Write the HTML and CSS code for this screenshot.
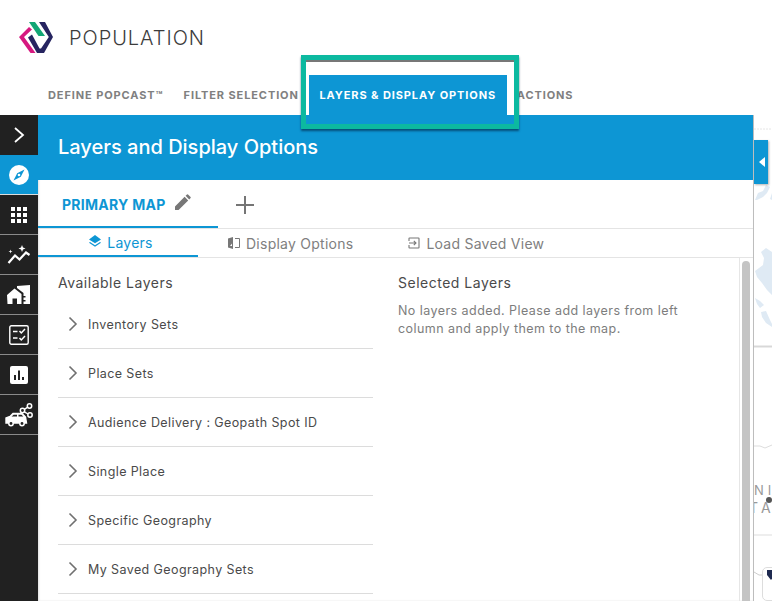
FILE: index.html
```html
<!DOCTYPE html>
<html lang="en">
<head>
<meta charset="utf-8">
<title>Population</title>
<link rel="stylesheet" href="styles.css">
</head>
<body>
<div class="app">
  <header class="brand">
    <svg class="logo" width="36" height="34" viewBox="0 0 36 34">
      <path d="M11 6 L1 16 L12.5 32 L17.5 32 L6 16 L14 8.5 Z" fill="#d6187f"/>
      <path d="M11 1 L17 1 L27 15 L20.5 15 Z" fill="#12a675"/>
      <path d="M21 1 L27 1 L35 16 L26 32 L19 32 L10 16.5 L14 13.5 L21.5 27.5 L23 27.5 L30.8 16 L21 1 Z" fill="#262460"/>
    </svg>
    <h1 class="brand-name">POPULATION</h1>
  </header>

  <nav class="steps">
    <a class="step step-one">DEFINE POPCAST™</a>
    <a class="step step-two">FILTER SELECTION</a>
    <a class="step step-active">LAYERS &amp; DISPLAY OPTIONS</a>
    <a class="step step-four">ACTIONS</a>
    <div class="highlight"></div>
  </nav>

  <main class="workspace">
    <aside class="rail">
      <div class="rail-item rail-toggle">
        <svg width="14" height="18" viewBox="0 0 14 18"><path d="M3 2 L11 9 L3 16" fill="none" stroke="#fff" stroke-width="1.8"/></svg>
      </div>
      <div class="rail-item rail-current">
        <svg width="20" height="20" viewBox="0 0 20 20"><circle cx="10" cy="10" r="10" fill="#fff"/><path d="M15.5 4.5 L11.8 11.8 L4.5 15.5 L8.2 8.2 Z" fill="#0d96d4"/><circle cx="10" cy="10" r="1.3" fill="#fff"/></svg>
      </div>
      <div class="rail-item">
        <svg width="16" height="16" viewBox="0 0 16 16" fill="#fff"><rect width="4" height="4"/><rect x="6" width="4" height="4"/><rect x="12" width="4" height="4"/><rect y="6" width="4" height="4"/><rect x="6" y="6" width="4" height="4"/><rect x="12" y="6" width="4" height="4"/><rect y="12" width="4" height="4"/><rect x="6" y="12" width="4" height="4"/><rect x="12" y="12" width="4" height="4"/></svg>
      </div>
      <div class="rail-item">
        <svg width="24" height="20" viewBox="0 0 24 20"><path d="M1.5 18 L8 10.5 L12.5 14.5 L19 7.5 L22.5 10" fill="none" stroke="#fff" stroke-width="2.2"/><path d="M15 0 L16 2.5 L18.5 3.5 L16 4.5 L15 7 L14 4.5 L11.5 3.5 L14 2.5 Z" fill="#fff"/><path d="M3.5 4.5 L4 6 L5.5 6.5 L4 7 L3.5 8.5 L3 7 L1.5 6.5 L3 6 Z" fill="#fff"/></svg>
      </div>
      <div class="rail-item">
        <svg width="24" height="20" viewBox="0 0 24 20" fill="#fff"><path d="M0 10 L7.5 3.5 L14.5 9 L14.5 19 L10 19 L10 13.5 L5.5 13.5 L5.5 19 L0.5 19 Z"/><path d="M10 1 L23 0 L23 19 L16.5 19 L16.5 16.5 L18.5 16.5 L18.5 15 L16.5 15 L16.5 12.5 L18.5 12.5 L18.5 11 L16.5 11 L16.5 8 L10 3 Z"/></svg>
      </div>
      <div class="rail-item">
        <svg width="20" height="20" viewBox="0 0 20 20" fill="none" stroke="#fff"><rect x="0.8" y="0.8" width="18.4" height="18.4" rx="1.5" stroke-width="1.4"/><path d="M4 6.5 H8.5 M4 13 H8.5" stroke-width="1.4"/><path d="M10.5 6 L12.3 8 L16 4 M10.5 13 L12.3 15 L16 11" stroke-width="1.5"/></svg>
      </div>
      <div class="rail-item">
        <svg width="18" height="18" viewBox="0 0 18 18"><rect width="18" height="18" rx="2" fill="#fff"/><path d="M4 9 H6 V14 H4 Z M8 4.5 H10 V14 H8 Z M12 11 H14 V14 H12 Z" fill="#222"/></svg>
      </div>
      <div class="rail-item">
        <svg width="28" height="24" viewBox="0 0 28 24" fill="none" stroke="#fff"><path d="M1 20 V15 L5 13.5 L8 10.5 H17 L20.5 14 L21.5 20 H1 Z" fill="#fff" stroke-width="1.4"/><path d="M6.5 13.5 L8.7 11.8 H12 V13.5 Z M13.5 11.8 H16.5 L18.3 13.5 H13.5 Z" fill="#222" stroke="none"/><circle cx="6" cy="20.5" r="2.2" fill="#222" stroke-width="1.5"/><circle cx="17" cy="20.5" r="2.2" fill="#222" stroke-width="1.5"/><circle cx="24.5" cy="3" r="2.2" stroke-width="1.5"/><circle cx="17.5" cy="7.5" r="2.2" stroke-width="1.5"/><circle cx="25" cy="12" r="2.2" stroke-width="1.5"/><path d="M22.7 4.2 L19.4 6.3 M19.4 8.8 L23 11" stroke-width="1.4"/></svg>
      </div>
    </aside>

    <section class="panel">
      <div class="panel-head">Layers and Display Options</div>
      <div class="map-tabs">
        <div class="map-tab">
          <span>PRIMARY MAP</span>
          <svg width="16" height="16" viewBox="0 0 16 16" fill="#777"><path d="M0 16 V12.4 L9.6 2.8 L13.2 6.4 L3.6 16 Z M10.6 1.8 L12 0.4 Q12.5 0 13 0.4 L15.6 3 Q16 3.5 15.6 4 L14.2 5.4 Z"/></svg>
        </div>
        <svg class="add-map" width="18" height="18" viewBox="0 0 18 18"><path d="M9 0 V18 M0 9 H18" stroke="#757575" stroke-width="2"/></svg>
      </div>
      <div class="sub-tabs">
        <div class="sub-tab sub-tab-active">
          <svg width="12" height="12" viewBox="0 0 12 12" fill="#0d96d4"><path d="M6 0 L12 4.4 L6 8.2 L0 4.4 Z"/><path d="M1 7 L6 10.2 L11 7 L12 7.8 L6 11.8 L0 7.8 Z"/></svg>
          <span>Layers</span>
        </div>
        <div class="sub-tab sub-tab-display">
          <svg width="12" height="12" viewBox="0 0 12 12"><path d="M0 1.5 L5 0 V12 L0 10.5 Z" fill="#777"/><path d="M7 1 H11 Q12 1 12 2 V10 Q12 11 11 11 H7 V10 H11 V2 H7 Z" fill="#777"/><path d="M2 9 L4 6.5 V9 Z" fill="#fff"/></svg>
          <span>Display Options</span>
        </div>
        <div class="sub-tab sub-tab-load">
          <svg width="12" height="12" viewBox="0 0 12 12" fill="none" stroke="#777" stroke-width="1.1"><path d="M1 4 V1.5 Q1 1 1.5 1 H10.5 Q11 1 11 1.5 V10.5 Q11 11 10.5 11 H1.5 Q1 11 1 10.5 V8"/><path d="M1 6 H8 M5.8 3.8 L8 6 L5.8 8.2"/></svg>
          <span>Load Saved View</span>
        </div>
      </div>
      <div class="panel-body">
        <div class="columns">
          <div class="col-available">
            <h2 class="col-title">Available Layers</h2>
            <ul class="layer-list">
              <li class="layer"><svg width="10" height="16" viewBox="0 0 10 16"><path d="M1.5 1.5 L8 8 L1.5 14.5" fill="none" stroke="#707070" stroke-width="1.6"/></svg>Inventory Sets</li>
              <li class="layer"><svg width="10" height="16" viewBox="0 0 10 16"><path d="M1.5 1.5 L8 8 L1.5 14.5" fill="none" stroke="#707070" stroke-width="1.6"/></svg>Place Sets</li>
              <li class="layer"><svg width="10" height="16" viewBox="0 0 10 16"><path d="M1.5 1.5 L8 8 L1.5 14.5" fill="none" stroke="#707070" stroke-width="1.6"/></svg>Audience Delivery : Geopath Spot ID</li>
              <li class="layer"><svg width="10" height="16" viewBox="0 0 10 16"><path d="M1.5 1.5 L8 8 L1.5 14.5" fill="none" stroke="#707070" stroke-width="1.6"/></svg>Single Place</li>
              <li class="layer"><svg width="10" height="16" viewBox="0 0 10 16"><path d="M1.5 1.5 L8 8 L1.5 14.5" fill="none" stroke="#707070" stroke-width="1.6"/></svg>Specific Geography</li>
              <li class="layer"><svg width="10" height="16" viewBox="0 0 10 16"><path d="M1.5 1.5 L8 8 L1.5 14.5" fill="none" stroke="#707070" stroke-width="1.6"/></svg>My Saved Geography Sets</li>
            </ul>
          </div>
          <div class="col-selected">
            <h2 class="col-title">Selected Layers</h2>
            <p class="empty-note">No layers added. Please add layers from left column and apply them to the map.</p>
          </div>
        </div>
        <div class="scroll-track"><div class="scroll-thumb"></div></div>
      </div>
    </section>

    <section class="map">
      <svg class="map-art" width="18" height="486" viewBox="0 0 18 486">
        <path d="M0 14 H18" stroke="#e6e6e6" stroke-dasharray="2 1"/>
        <path d="M1 85 L4 78 L9 76 L12 70 L16 72 L13 78 L9 82 L3 85 Z M16 84 L18 78 V85 Z" fill="#dfeaf4"/>
        <path d="M1 156 L9 150 L10 143 L7 137 L12 133 L18 137 V180 L13 175 L8 168 L3 162 Z" fill="#dfeaf4"/>
        <path d="M1 183 L6 186 L10 190 L6 193 L3 189 Z M7 197 L12 196 L16 205 L18 209 V212 L12 208 L8 202 Z" fill="#dfeaf4"/>
        <path d="M0 231.5 H18" stroke="#d8d8d8" stroke-width="2"/>
        <path d="M0 331 L6 331 L11 333 L18 330" fill="none" stroke="#ddd"/>
        <path d="M0 420 H18" stroke="#ddd"/>
        <path d="M0 457 L5 460 L8 460" fill="none" stroke="#ccc"/>
      </svg>
      <span class="map-label map-label-a">NIT</span>
      <span class="map-label map-label-b">T A</span>
      <span class="map-dot"></span>
      <button class="map-toggle" aria-label="Toggle panel"><svg width="6" height="10" viewBox="0 0 6 10"><path d="M6 0 V10 L0 5 Z" fill="#fff"/></svg></button>
      <div class="map-chip"><svg width="8" height="10" viewBox="0 0 8 10"><path d="M0 0 H8 V5 L4 10 L0 5 Z" fill="#1e2a50"/></svg></div>
    </section>
  </main>
</div>
</body>
</html>
```
FILE: styles.css
```css
* { box-sizing: border-box; }
html, body { margin: 0; padding: 0; height: 100%; overflow: hidden; background: #fff; }
body { font-family: Inter, "Liberation Sans", sans-serif; color: #4a4a4a; }
.app { width: 772px; height: 601px; display: flex; flex-direction: column; overflow: hidden; }

.brand { height: 75px; display: flex; align-items: flex-start; padding: 21px 0 0 18px; gap: 15px; flex: none; }
.logo { flex: none; }
.brand-name { margin: 0; font-size: 20px; line-height: 34px; font-weight: 300; color: #3c3c3c; letter-spacing: .95px; }

.steps { height: 40px; flex: none; position: relative; display: flex; align-items: center; padding-left: 48px; font-size: 11px; font-weight: 700; letter-spacing: .9px; color: #808080; }
.step { white-space: nowrap; line-height: 40px; flex: none; }
.step-two { margin-left: 20px; }
.step-active { margin-left: 10px; width: 198px; background: #0d96d4; color: #fff; text-align: center; position: relative; }
.step-four { margin-left: 10px; }
.highlight { position: absolute; left: 301px; top: -20px; width: 218px; height: 74px; border: 5px solid #0cb9a0; box-shadow: 0 2px 2px rgba(0,40,70,.65), inset 0 2px 0 #777; z-index: 3; }

.workspace { flex: 1; min-height: 0; display: flex; }

.rail { width: 38px; flex: none; background: #212121; display: flex; flex-direction: column; }
.rail-item { height: 40px; flex: none; display: flex; align-items: center; justify-content: center; border-bottom: 1px solid #8a8a8a; padding: 1px 1px 0 0; }
.rail-toggle { border-bottom: 0; padding: 0 1px 1px 0; }
.rail-current { background: #0d96d4; height: 39.5px; border-bottom: 1px solid #dcdcdc; }

.panel { width: 716px; flex: none; display: flex; flex-direction: column; border-right: 1px solid #bdbdbd; background: #fff; box-shadow: inset 1px 0 2px rgba(0,0,0,.12); }
.panel-head { height: 65px; flex: none; background: #0d96d4; color: #fff; font-size: 20px; font-weight: 500; line-height: 64px; padding-left: 20px; }

.map-tabs { height: 49px; flex: none; display: flex; align-items: center; border-bottom: 1px solid #e4e4e4; }
.map-tab { width: 180px; height: 48px; display: flex; align-items: center; gap: 9px; padding: 2px 0 0 24px; color: #0d96d4; font-size: 14px; font-weight: 700; letter-spacing: .27px; border-bottom: 2px solid #0d96d4; }
.map-tab svg { margin-top: -5px; }
.add-map { margin-left: 18px; margin-top: 2px; }

.sub-tabs { height: 29px; flex: none; display: flex; border-bottom: 1px solid #e4e4e4; font-size: 14px; letter-spacing: .25px; color: #808080; }
.sub-tab { display: flex; align-items: center; gap: 6px; height: 28px; }
.sub-tab-active { width: 160px; justify-content: center; color: #0d96d4; border-bottom: 2px solid #0d96d4; padding-left: 6px; }
.sub-tab-active svg { margin-top: -3px; }
.sub-tab-display { margin-left: 30px; }
.sub-tab-load { margin-left: 55px; }

.panel-body { flex: 1; min-height: 0; display: flex; overflow: hidden; }
.columns { flex: 1; display: flex; padding: 16px 0 0 20px; }
.col-available { width: 315px; flex: none; }
.col-selected { margin-left: 25px; width: 300px; }
.col-title { margin: 0; font-size: 14px; line-height: 18px; font-weight: 400; color: #4a4a4a; letter-spacing: .5px; }
.layer-list { list-style: none; margin: 8px 0 0; padding: 0; }
.layer { height: 49px; display: flex; align-items: center; gap: 10px; padding-left: 10px; border-bottom: 1px solid #dcdcdc; font-size: 12.5px; letter-spacing: .4px; color: #4a4a4a; }
.empty-note { margin: 10px 0 0; font-size: 12.5px; line-height: 18px; letter-spacing: .44px; color: #7d7d7d; }

.scroll-track { width: 14px; flex: none; border-left: 1px solid #e6e6e6; padding: 3px 3px 0 2px; }
.scroll-thumb { height: 400px; background: #c4c4c4; border-radius: 4px 4px 0 0; }

.map { flex: 1; position: relative; overflow: hidden; background: #fff; }
.map-art { display: block; }
.map-toggle { position: absolute; left: 0; top: 25px; width: 14px; height: 44px; border: 0; padding: 0 0 0 1px; background: #0d96d4; box-shadow: 1px 1px 2px rgba(0,0,0,.3); display: flex; align-items: center; justify-content: center; }
.map-label { position: absolute; left: 0; color: #999; font-size: 13px; white-space: nowrap; line-height: 14px; }
.map-label-a { top: 368px; letter-spacing: 4px; }
.map-label-b { top: 386px; left: -5px; font-size: 14px; letter-spacing: 2px; word-spacing: -5px; }
.map-dot { position: absolute; left: 12px; top: 382px; width: 6px; height: 6px; border-radius: 50%; background: #555; }
.map-chip { position: absolute; left: 8px; top: 452px; width: 30px; height: 34px; background: #fff; border: 1px solid #ddd; border-radius: 5px; padding: 2px 0 0 4px; }
.map-chip svg { display: block; }
```
